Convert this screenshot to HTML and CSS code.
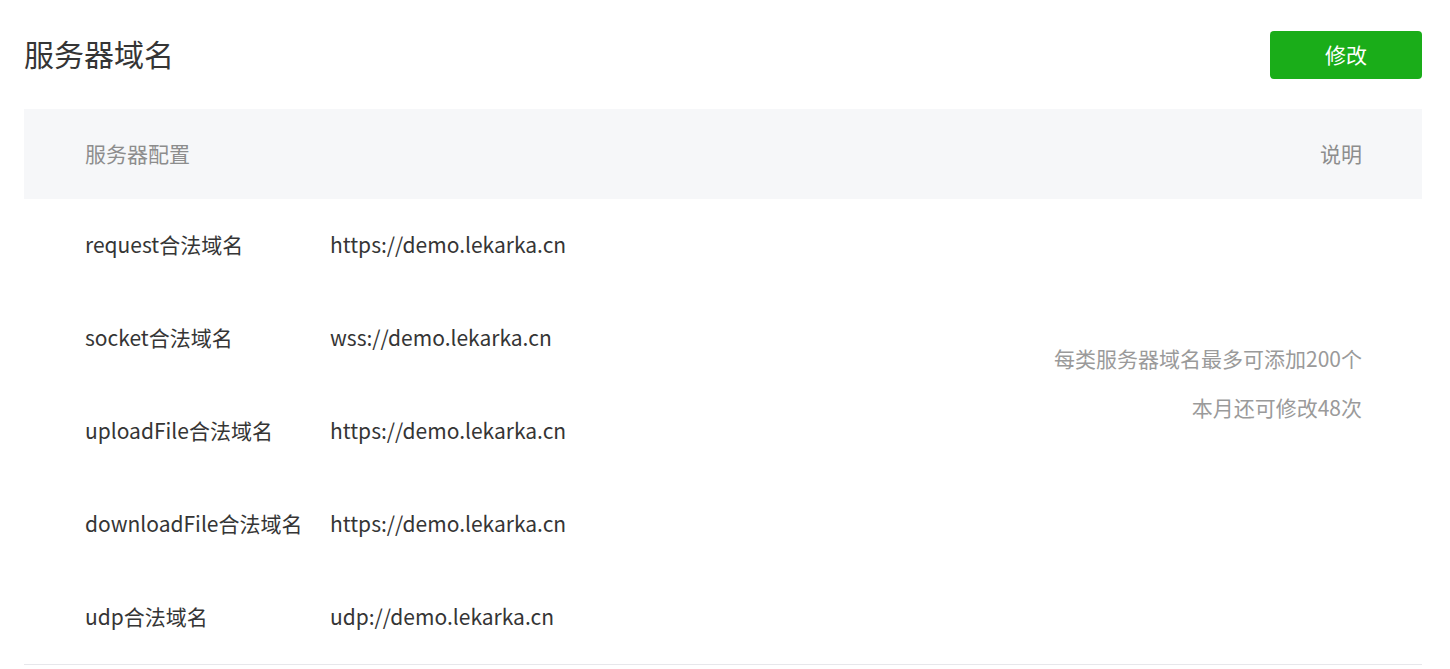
FILE: index.html
```html
<!DOCTYPE html>
<html lang="zh-CN">
<head>
<meta charset="utf-8">
<title>服务器域名</title>
<link rel="stylesheet" href="styles.css">
</head>
<body>
<div class="page">
  <div class="topbar">
    <h1 class="title">服务器域名</h1>
    <button class="btn-primary" type="button">修改</button>
  </div>
  <div class="table">
    <div class="thead">
      <span class="th">服务器配置</span>
      <span class="th">说明</span>
    </div>
    <div class="tbody">
      <div class="cell label r1">request合法域名</div>
      <div class="cell value r1">https://demo.lekarka.cn</div>
      <div class="cell label r2">socket合法域名</div>
      <div class="cell value r2">wss://demo.lekarka.cn</div>
      <div class="cell label r3">uploadFile合法域名</div>
      <div class="cell value r3">https://demo.lekarka.cn</div>
      <div class="cell label r4">downloadFile合法域名</div>
      <div class="cell value r4">https://demo.lekarka.cn</div>
      <div class="cell label r5">udp合法域名</div>
      <div class="cell value r5">udp://demo.lekarka.cn</div>
      <div class="note">
        <p class="note-line">每类服务器域名最多可添加200个</p>
        <p class="note-line">本月还可修改48次</p>
      </div>
    </div>
  </div>
</div>
</body>
</html>
```
FILE: styles.css
```css
html, body {
  margin: 0;
  padding: 0;
  background: #ffffff;
}

body {
  font-family: "Noto Sans CJK SC", "Noto Sans", sans-serif;
  color: #353535;
}

.page {
  padding: 31px 28px 0 24px;
}

.topbar {
  display: flex;
  align-items: center;
  justify-content: space-between;
  height: 48px;
}

.title {
  margin: 0;
  padding-bottom: 4px;
  font-size: 30px;
  font-weight: 400;
  line-height: 44px;
  color: #353535;
}

.btn-primary {
  width: 152px;
  height: 48px;
  border: 0;
  border-radius: 4px;
  background: #1aad19;
  color: #ffffff;
  font-family: inherit;
  font-size: 21px;
  padding: 0 0 2px;
}

.table {
  margin-top: 30px;
  border-bottom: 1px solid #e7e7eb;
}

.thead {
  display: flex;
  align-items: center;
  justify-content: space-between;
  height: 90px;
  box-sizing: border-box;
  padding: 0 60px 2px 61px;
  background: #f6f7f9;
  font-size: 21px;
  color: #8d8d8d;
}

.tbody {
  display: grid;
  grid-template-columns: 245px 1fr auto;
  grid-template-rows: repeat(5, 93px);
  padding: 0 60px 0 61px;
}

.cell {
  display: flex;
  align-items: center;
  padding-bottom: 3px;
  font-size: 21px;
  color: #353535;
}

.label { grid-column: 1; }
.value { grid-column: 2; }
.r1 { grid-row: 1; }
.r2 { grid-row: 2; }
.r3 { grid-row: 3; }
.r4 { grid-row: 4; }
.r5 { grid-row: 5; }

.note {
  grid-column: 3;
  grid-row: 1 / 6;
  align-self: start;
  padding-top: 135px;
  text-align: right;
}

.note-line {
  margin: 0;
  font-size: 21px;
  line-height: 49px;
  color: #9a9a9a;
}
```
